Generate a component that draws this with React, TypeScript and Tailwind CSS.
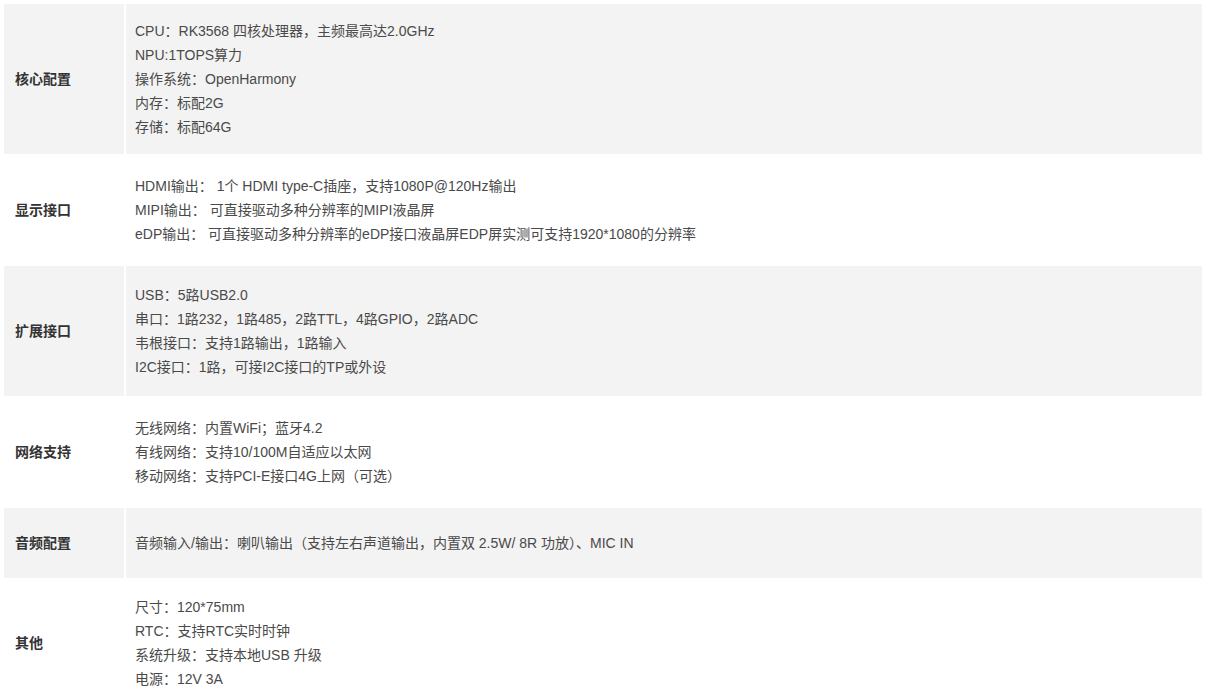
const specs = [
  {
    label: "核心配置",
    h: "h-[150px]",
    lines: [
      "CPU：RK3568 四核处理器，主频最高达2.0GHz",
      "NPU:1TOPS算力",
      "操作系统：OpenHarmony",
      "内存：标配2G",
      "存储：标配64G",
    ],
  },
  {
    label: "显示接口",
    h: "h-[112px]",
    lines: [
      "HDMI输出： 1个 HDMI type-C插座，支持1080P@120Hz输出",
      "MIPI输出： 可直接驱动多种分辨率的MIPI液晶屏",
      "eDP输出： 可直接驱动多种分辨率的eDP接口液晶屏EDP屏实测可支持1920*1080的分辨率",
    ],
  },
  {
    label: "扩展接口",
    h: "h-[130px]",
    lines: [
      "USB：5路USB2.0",
      "串口：1路232，1路485，2路TTL，4路GPIO，2路ADC",
      "韦根接口：支持1路输出，1路输入",
      "I2C接口：1路，可接I2C接口的TP或外设",
    ],
  },
  {
    label: "网络支持",
    h: "h-[112px]",
    lines: [
      "无线网络：内置WiFi；蓝牙4.2",
      "有线网络：支持10/100M自适应以太网",
      "移动网络：支持PCI-E接口4G上网（可选）",
    ],
  },
  {
    label: "音频配置",
    h: "h-[70px]",
    lines: ["音频输入/输出：喇叭输出（支持左右声道输出，内置双 2.5W/ 8R 功放）、MIC IN"],
  },
  {
    label: "其他",
    h: "h-[130px]",
    lines: ["尺寸：120*75mm", "RTC：支持RTC实时时钟", "系统升级：支持本地USB 升级", "电源：12V 3A"],
  },
];

export default function App() {
  return (
    <div className="min-h-screen bg-white p-1 font-['Liberation_Sans','Noto_Sans_CJK_SC',sans-serif] text-[14px] leading-6">
      <div className="flex flex-col">
        {specs.map((row, i) => (
          <div
            key={row.label}
            className={`grid grid-cols-[120px_1fr] gap-x-[2px] ${row.h} ${i % 2 === 0 ? "[&>div]:bg-[#f3f3f3]" : ""}`}
          >
            <div className="flex items-center pl-[11px] font-bold text-[#333]">{row.label}</div>
            <div className="flex flex-col justify-center pl-[9px] text-[#4a4a4a]">
              {row.lines.map((line) => (
                <p key={line}>{line}</p>
              ))}
            </div>
          </div>
        ))}
      </div>
    </div>
  );
}
